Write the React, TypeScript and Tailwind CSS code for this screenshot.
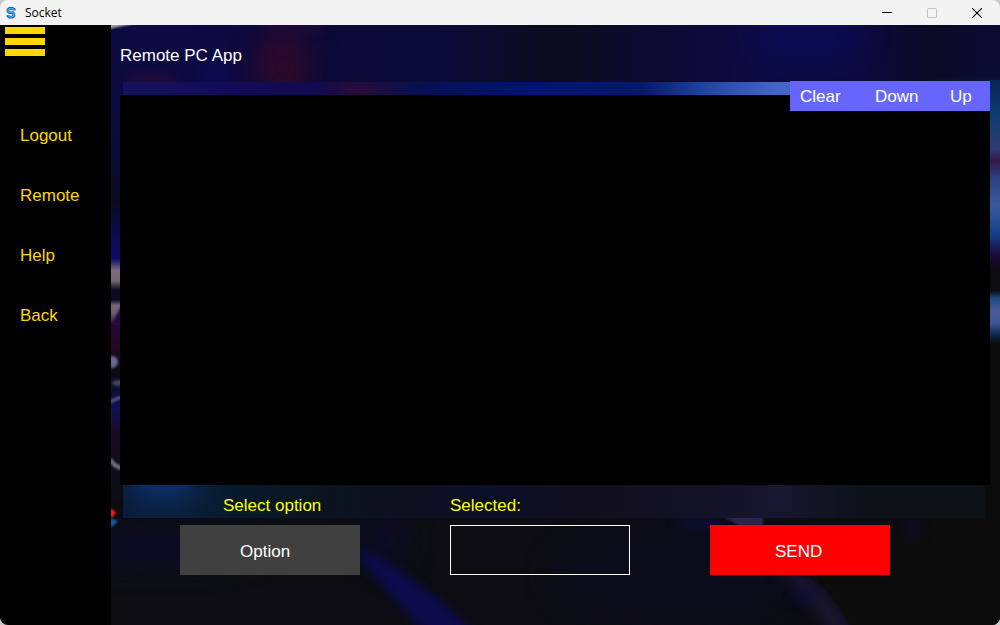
import React from "react";

const menuItems = ["Logout", "Remote", "Help", "Back"];

function SocketLogo() {
  return (
    <svg viewBox="0 0 10 12" className="h-3 w-2.5" aria-hidden="true">
      <path
        d="M8.2 3.4V2.4L6.6 1.5H3.4L2 2.7v1.7l1.5 1.3h3.2l1.2 1.2v2L6.4 10.2H3.4L2 9V8"
        fill="none"
        stroke="#1c62b0"
        strokeWidth="2.8"
      />
      <path
        d="M8 3.4V2.6L6.4 1.6H3.4L2.2 2.8v1.4l1.3 1.2h3.2l1.2 1.2v2.2L6.4 9.9H3.4L2.2 8.8V8.2"
        fill="none"
        stroke="#45a5f5"
        strokeWidth="1.3"
      />
    </svg>
  );
}

function TitleBar() {
  return (
    <header className="flex h-[25px] shrink-0 items-center bg-[#f3f3f3] pl-1.5 text-black">
      <SocketLogo />
      <span className="ml-[9px] flex-1 font-['Open_Sans','Noto_Sans',sans-serif] text-[12px] leading-4">
        Socket
      </span>
      <button type="button" aria-label="Minimize" className="flex h-full w-[45px] items-center justify-center">
        <svg viewBox="0 0 10 10" className="size-2.5" aria-hidden="true">
          <path d="M0 4.5h10" stroke="#000" />
        </svg>
      </button>
      <button type="button" aria-label="Maximize" disabled className="flex h-full w-[45px] items-center justify-center">
        <svg viewBox="0 0 10 10" className="size-2.5" aria-hidden="true">
          <rect x="0.5" y="0.5" width="9" height="9" rx="0.5" fill="none" stroke="#c4c4c4" />
        </svg>
      </button>
      <button type="button" aria-label="Close" className="flex h-full w-[46px] items-center justify-center">
        <svg viewBox="0 0 10 10" className="size-2.5" aria-hidden="true">
          <path d="M0.2 0.2l9.6 9.6M9.8 0.2L0.2 9.8" stroke="#000" strokeWidth="1.1" />
        </svg>
      </button>
    </header>
  );
}

function Backdrop() {
  return (
    <svg
      viewBox="111 25 889 600"
      preserveAspectRatio="none"
      className="absolute inset-0 size-full"
      aria-hidden="true"
    >
      <defs>
        <filter id="soft" x="-100%" y="-100%" width="300%" height="300%" colorInterpolationFilters="sRGB">
          <feGaussianBlur stdDeviation="14" />
        </filter>
        <filter id="mid" x="-100%" y="-100%" width="300%" height="300%" colorInterpolationFilters="sRGB">
          <feGaussianBlur stdDeviation="5" />
        </filter>
        <filter id="crisp" x="-50%" y="-50%" width="200%" height="200%" colorInterpolationFilters="sRGB">
          <feGaussianBlur stdDeviation="1.2" />
        </filter>
        <linearGradient id="sky" x1="0" x2="1" y1="0" y2="0">
          <stop offset="0" stopColor="#0c0b40" />
          <stop offset="0.1" stopColor="#0d0a42" />
          <stop offset="0.24" stopColor="#0b0a36" />
          <stop offset="0.38" stopColor="#0b0b38" />
          <stop offset="0.5" stopColor="#0b0c1c" />
          <stop offset="0.6" stopColor="#0c0a30" />
          <stop offset="0.74" stopColor="#0d0b44" />
          <stop offset="0.84" stopColor="#0c0a40" />
          <stop offset="0.92" stopColor="#0a0a24" />
          <stop offset="1" stopColor="#0c0b34" />
        </linearGradient>
        <linearGradient id="leftEdge" gradientUnits="userSpaceOnUse" x1="0" x2="0" y1="95" y2="485">
          <stop offset="0" stopColor="#0c0b40" />
          <stop offset="0.18" stopColor="#0c0b34" />
          <stop offset="0.27" stopColor="#0c0a1e" />
          <stop offset="0.35" stopColor="#0b0a4c" />
          <stop offset="0.42" stopColor="#0c0b66" />
          <stop offset="0.45" stopColor="#7d6c7c" />
          <stop offset="0.475" stopColor="#776a74" />
          <stop offset="0.5" stopColor="#0a0a20" />
          <stop offset="0.525" stopColor="#0a0c1c" />
          <stop offset="0.54" stopColor="#766978" />
          <stop offset="0.56" stopColor="#6b5c74" />
          <stop offset="0.59" stopColor="#220938" />
          <stop offset="0.64" stopColor="#220824" />
          <stop offset="0.72" stopColor="#0b0b14" />
          <stop offset="0.8" stopColor="#10105a" />
          <stop offset="0.87" stopColor="#1c0a22" />
          <stop offset="1" stopColor="#0c0c18" />
        </linearGradient>
        <linearGradient id="rightEdge" gradientUnits="userSpaceOnUse" x1="0" x2="0" y1="80" y2="485">
          <stop offset="0" stopColor="#0c2258" />
          <stop offset="0.08" stopColor="#0c3c70" />
          <stop offset="0.17" stopColor="#303c74" />
          <stop offset="0.2" stopColor="#34184a" />
          <stop offset="0.24" stopColor="#2c4080" />
          <stop offset="0.31" stopColor="#3a5a9c" />
          <stop offset="0.38" stopColor="#14408a" />
          <stop offset="0.43" stopColor="#1c0c3c" />
          <stop offset="0.47" stopColor="#0c0b10" />
          <stop offset="0.52" stopColor="#0c0c14" />
          <stop offset="0.54" stopColor="#1c4a80" />
          <stop offset="0.57" stopColor="#4c5a98" />
          <stop offset="0.6" stopColor="#405694" />
          <stop offset="0.63" stopColor="#0a2848" />
          <stop offset="0.65" stopColor="#0c0c0c" />
          <stop offset="1" stopColor="#0c0c0c" />
        </linearGradient>
        <linearGradient id="topStrip" x1="0" x2="1" y1="0" y2="0">
          <stop offset="0" stopColor="#14125c" />
          <stop offset="0.13" stopColor="#140b58" />
          <stop offset="0.22" stopColor="#100a50" />
          <stop offset="0.275" stopColor="#290b3c" />
          <stop offset="0.34" stopColor="#061050" />
          <stop offset="0.48" stopColor="#001478" />
          <stop offset="0.6" stopColor="#04186c" />
          <stop offset="0.69" stopColor="#264cac" />
          <stop offset="0.76" stopColor="#4466c8" />
          <stop offset="1" stopColor="#2c4ca8" />
        </linearGradient>
        <linearGradient id="bottomStrip" x1="0" x2="1" y1="0" y2="0">
          <stop offset="0" stopColor="#0a1c38" />
          <stop offset="0.06" stopColor="#0b1f3c" />
          <stop offset="0.13" stopColor="#071a2c" />
          <stop offset="0.24" stopColor="#0b141e" />
          <stop offset="0.34" stopColor="#0f0f20" />
          <stop offset="0.42" stopColor="#0c0f2a" />
          <stop offset="0.54" stopColor="#120f1d" />
          <stop offset="0.67" stopColor="#121126" />
          <stop offset="0.76" stopColor="#17162e" />
          <stop offset="0.86" stopColor="#0d1219" />
          <stop offset="1" stopColor="#0d1218" />
        </linearGradient>
        <clipPath id="lowerBand">
          <rect x="123" y="484" width="862" height="34" />
        </clipPath>
      </defs>

      <rect x="111" y="25" width="889" height="600" fill="#0c0c12" />
      <rect x="111" y="25" width="889" height="70" fill="url(#sky)" />
      <ellipse cx="283" cy="66" rx="28" ry="38" fill="#340a26" opacity="0.8" filter="url(#soft)" />
      <ellipse cx="295" cy="25" rx="34" ry="10" fill="#240a3c" opacity="0.6" filter="url(#mid)" />
      <ellipse cx="150" cy="80" rx="26" ry="8" fill="#280a38" opacity="0.7" filter="url(#mid)" />
      <ellipse cx="215" cy="75" rx="16" ry="16" fill="#0d0c58" opacity="0.6" filter="url(#mid)" />
      <ellipse cx="810" cy="36" rx="55" ry="22" fill="#0c0b5c" opacity="0.7" filter="url(#soft)" />
      <ellipse cx="985" cy="92" rx="65" ry="9" fill="#0c2c68" opacity="0.8" filter="url(#mid)" />
      <path d="M109 23h30q-17 3-30 6z" fill="#a69ca4" filter="url(#crisp)" />

      <rect x="111" y="95" width="12" height="390" fill="url(#leftEdge)" />
      <path d="M121 306v18h-9z" fill="#22093c" filter="url(#crisp)" />
      <ellipse cx="112" cy="362" rx="6" ry="6" fill="#68688c" filter="url(#crisp)" />
      <ellipse cx="118" cy="383" rx="6" ry="3" fill="#44405c" filter="url(#crisp)" />
      <path d="M110 402l11-5" stroke="#685888" strokeWidth="3" filter="url(#crisp)" />
      <path d="M110 459q4 8 12 9" fill="none" stroke="#69737c" strokeWidth="4" filter="url(#crisp)" />
      <rect x="988" y="80" width="12" height="405" fill="url(#rightEdge)" />

      <ellipse cx="160" cy="548" rx="110" ry="18" fill="#0c0b30" opacity="0.7" filter="url(#soft)" />
      <ellipse cx="385" cy="540" rx="22" ry="24" fill="#0c0b28" filter="url(#soft)" />
      <path d="M350 545Q405 562 492 650H444Q390 600 350 545z" fill="#0d0b4c" filter="url(#mid)" />
      <ellipse cx="680" cy="575" rx="130" ry="50" fill="#0c0b20" opacity="0.6" filter="url(#soft)" />
      <ellipse cx="700" cy="522" rx="24" ry="8" fill="#0c0e38" opacity="0.7" filter="url(#mid)" />
      <path d="M725 512h38v15h-24q-4-6-14-8z" fill="#2b2548" filter="url(#crisp)" />
      <path d="M775 570H803Q832 592 852 630H826Q805 595 775 570z" fill="#19152c" filter="url(#mid)" />
      <ellipse cx="806" cy="596" rx="14" ry="10" fill="#0c0e38" opacity="0.6" filter="url(#mid)" />
      <path d="M806 573Q836 595 852 628H1003V485H895V573z" fill="#0c0c0c" filter="url(#crisp)" />
      <ellipse cx="913" cy="528" rx="9" ry="12" fill="#0c0b24" filter="url(#mid)" />
      <path d="M110 508l6 4-3 5h-3z" fill="#f82018" filter="url(#crisp)" />
      <path d="M110 518l8 3-6 6h-2z" fill="#145ca8" filter="url(#crisp)" />

      <rect x="123" y="82" width="862" height="14" fill="url(#topStrip)" />
      <rect x="123" y="484" width="862" height="34" fill="url(#bottomStrip)" />
      <g clipPath="url(#lowerBand)">
        <ellipse cx="163" cy="484" rx="36" ry="14" fill="#0c3478" opacity="0.9" filter="url(#soft)" />
        <ellipse cx="163" cy="484" rx="28" ry="7" fill="#0c3478" opacity="0.4" filter="url(#mid)" />
      </g>
    </svg>
  );
}

function Sidebar() {
  return (
    <nav className="w-[111px] shrink-0 bg-black text-[#ffd700]">
      <button type="button" aria-label="Toggle menu" className="ml-[5px] mt-0.5 flex w-10 flex-col gap-1">
        <span className="h-[7px] w-full bg-[#ffd700]" />
        <span className="h-[7px] w-full bg-[#ffd700]" />
        <span className="h-[7px] w-full bg-[#ffd700]" />
      </button>
      <ul className="mt-[70px] flex flex-col gap-10 pl-5">
        {menuItems.map((item) => (
          <li key={item} className="leading-5">
            <a href={"#" + item.toLowerCase()}>{item}</a>
          </li>
        ))}
      </ul>
    </nav>
  );
}

export default function App() {
  return (
    <div className="h-screen bg-[#c8c8c8]">
      <div className="flex h-full flex-col overflow-hidden rounded-lg font-['Liberation_Sans',Arial,sans-serif] text-[17px] leading-5">
        <TitleBar />
        <div className="flex min-h-0 flex-1">
          <Sidebar />
          <main className="relative min-w-0 flex-1">
            <Backdrop />
            <div className="relative flex h-full flex-col pl-[9px] pr-2.5">
              <h1 className="h-14 pt-[21px] text-white">Remote PC App</h1>

              <section className="relative flex min-h-0 flex-1 flex-col pt-3.5" aria-label="Console">
                <div role="log" className="flex-1 bg-black" />
                <div className="absolute right-0 top-0 flex h-[30px] w-[200px] items-center bg-[#6666ff] pl-2.5 pt-0.5 text-white">
                  <button type="button" className="w-[75px] text-left">Clear</button>
                  <button type="button" className="w-[75px] text-left">Down</button>
                  <button type="button" className="text-left">Up</button>
                </div>
              </section>

              <form className="flex items-end pb-[50px] pl-[60px] pt-[11px]" onSubmit={(e) => e.preventDefault()}>
                <div className="mr-[90px] flex w-[180px] flex-col gap-[9px]">
                  <label htmlFor="option" className="pl-[43px] text-[#ffff00]">Select option</label>
                  <button id="option" type="button" className="h-[50px] bg-[#404040] pl-[60px] pt-1 text-left text-white">
                    Option
                  </button>
                </div>
                <div className="mr-20 flex w-[180px] flex-col gap-[9px]">
                  <label htmlFor="selected" className="text-[#ffff00]">Selected:</label>
                  <input
                    id="selected"
                    type="text"
                    readOnly
                    className="h-[50px] w-full border border-white bg-transparent px-2.5 text-white outline-none"
                  />
                </div>
                <button type="submit" className="h-[50px] w-[180px] bg-[#ff0000] pl-[65px] pt-1 text-left text-white">
                  SEND
                </button>
              </form>
            </div>
          </main>
        </div>
      </div>
    </div>
  );
}
